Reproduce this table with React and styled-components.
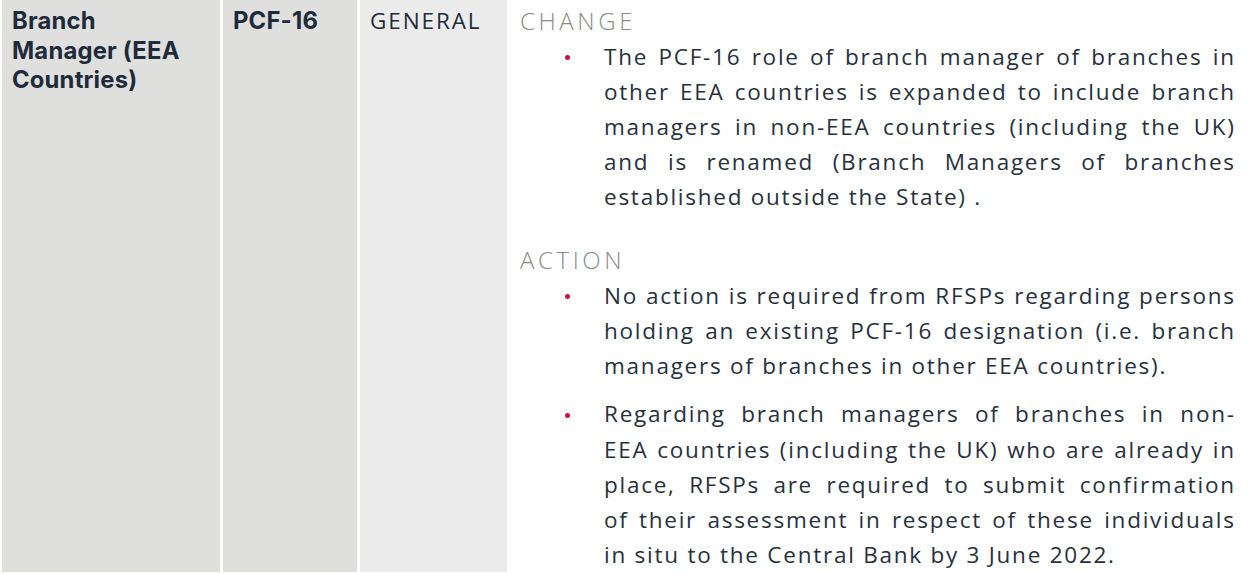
import React from 'react'
import styled, { createGlobalStyle } from 'styled-components'

const colors = {
  ink: '#1e2b3a',
  text: '#27303d',
  muted: '#8a8a8a',
  red: '#d0103a',
  cellDark: '#dfdfdd',
  cellLight: '#ebebeb',
  white: '#ffffff',
}

const GlobalStyle = createGlobalStyle`
  html, body {
    margin: 0;
    padding: 0;
    background: ${colors.white};
  }
  body {
    font-family: "Open Sans", Roboto, "Liberation Sans", sans-serif;
    color: ${colors.text};
  }
`

const sections = [
  {
    label: 'CHANGE',
    items: [
      [
        'The PCF-16 role of branch manager of branches in',
        'other EEA countries is expanded to include branch',
        'managers in non-EEA countries (including the UK)',
        'and is renamed (Branch Managers of branches',
        'established outside the State) .',
      ],
    ],
  },
  {
    label: 'ACTION',
    items: [
      [
        'No action is required from RFSPs regarding persons',
        'holding an existing PCF-16 designation (i.e. branch',
        'managers of branches in other EEA countries).',
      ],
      [
        'Regarding branch managers of branches in non-',
        'EEA countries (including the UK) who are already in',
        'place, RFSPs are required to submit confirmation',
        'of their assessment in respect of these individuals',
        'in situ to the Central Bank by 3 June 2022.',
      ],
    ],
  },
]

const App = () => {
  return (
    <>
      <GlobalStyle />
      <Table>
        <Cell $tone="dark" $padRight={24}>
          <RoleTitle>Branch Manager (EEA Countries)</RoleTitle>
        </Cell>
        <Cell $tone="dark">
          <RoleTitle>PCF-16</RoleTitle>
        </Cell>
        <Cell $tone="light">
          <Category>GENERAL</Category>
        </Cell>
        <Detail>
          {sections.map((section, i) => (
            <Section key={section.label} $first={i === 0}>
              <Label>{section.label}</Label>
              <BulletList>
                {section.items.map((lines, j) => (
                  <Bullet key={j}>
                    {lines.map((line, k) => (
                      <Line key={k} $last={k === lines.length - 1}>
                        {line}
                      </Line>
                    ))}
                  </Bullet>
                ))}
              </BulletList>
            </Section>
          ))}
        </Detail>
      </Table>
    </>
  )
}

const Table = styled.div`
  display: grid;
  grid-template-columns: 218px 134px 147px minmax(0, 1fr);
  column-gap: 3px;
  padding-left: 2px;
  width: 1249px;
  box-sizing: border-box;
  min-height: 572px;
`

const Cell = styled.div`
  background: ${({ $tone }) =>
    $tone === 'dark' ? colors.cellDark : colors.cellLight};
  padding: 6px ${({ $padRight = 12 }) => $padRight}px 0 10px;
`

const RoleTitle = styled.div`
  font-family: Inter, Roboto, sans-serif;
  font-weight: 700;
  font-size: 23.8px;
  line-height: 29.5px;
  letter-spacing: 0.2px;
  color: ${colors.ink};
`

const Category = styled.div`
  font-family: "Open Sans", Roboto, sans-serif;
  font-weight: 400;
  font-size: 22.5px;
  line-height: 29.5px;
  letter-spacing: 1.9px;
  color: ${colors.ink};
`

const Detail = styled.div`
  background: ${colors.white};
  padding: 3.4px 15px 0 10px;
`

const Section = styled.div`
  margin-top: ${({ $first }) => ($first ? '0' : '27.8px')};
`

const Label = styled.div`
  font-family: "Open Sans", Roboto, sans-serif;
  font-weight: 300;
  font-size: 24px;
  line-height: 35.2px;
  letter-spacing: 3.6px;
  color: ${colors.muted};
`

const BulletList = styled.ul`
  list-style: none;
  margin: 0;
  padding: 0 0 0 84px;
`

const Bullet = styled.li`
  position: relative;
  font-size: 22.5px;
  line-height: 35.2px;
  letter-spacing: 1.75px;
  color: ${colors.text};
  & + & {
    margin-top: 13.2px;
  }
  &::before {
    content: '';
    position: absolute;
    left: -39px;
    top: 16.5px;
    width: 5px;
    height: 5px;
    border-radius: 50%;
    background: ${colors.red};
  }
`

const Line = styled.span`
  display: block;
  text-align: justify;
  text-align-last: ${({ $last }) => ($last ? 'left' : 'justify')};
  white-space: nowrap;
  margin-right: -1.75px;
`

export default App
